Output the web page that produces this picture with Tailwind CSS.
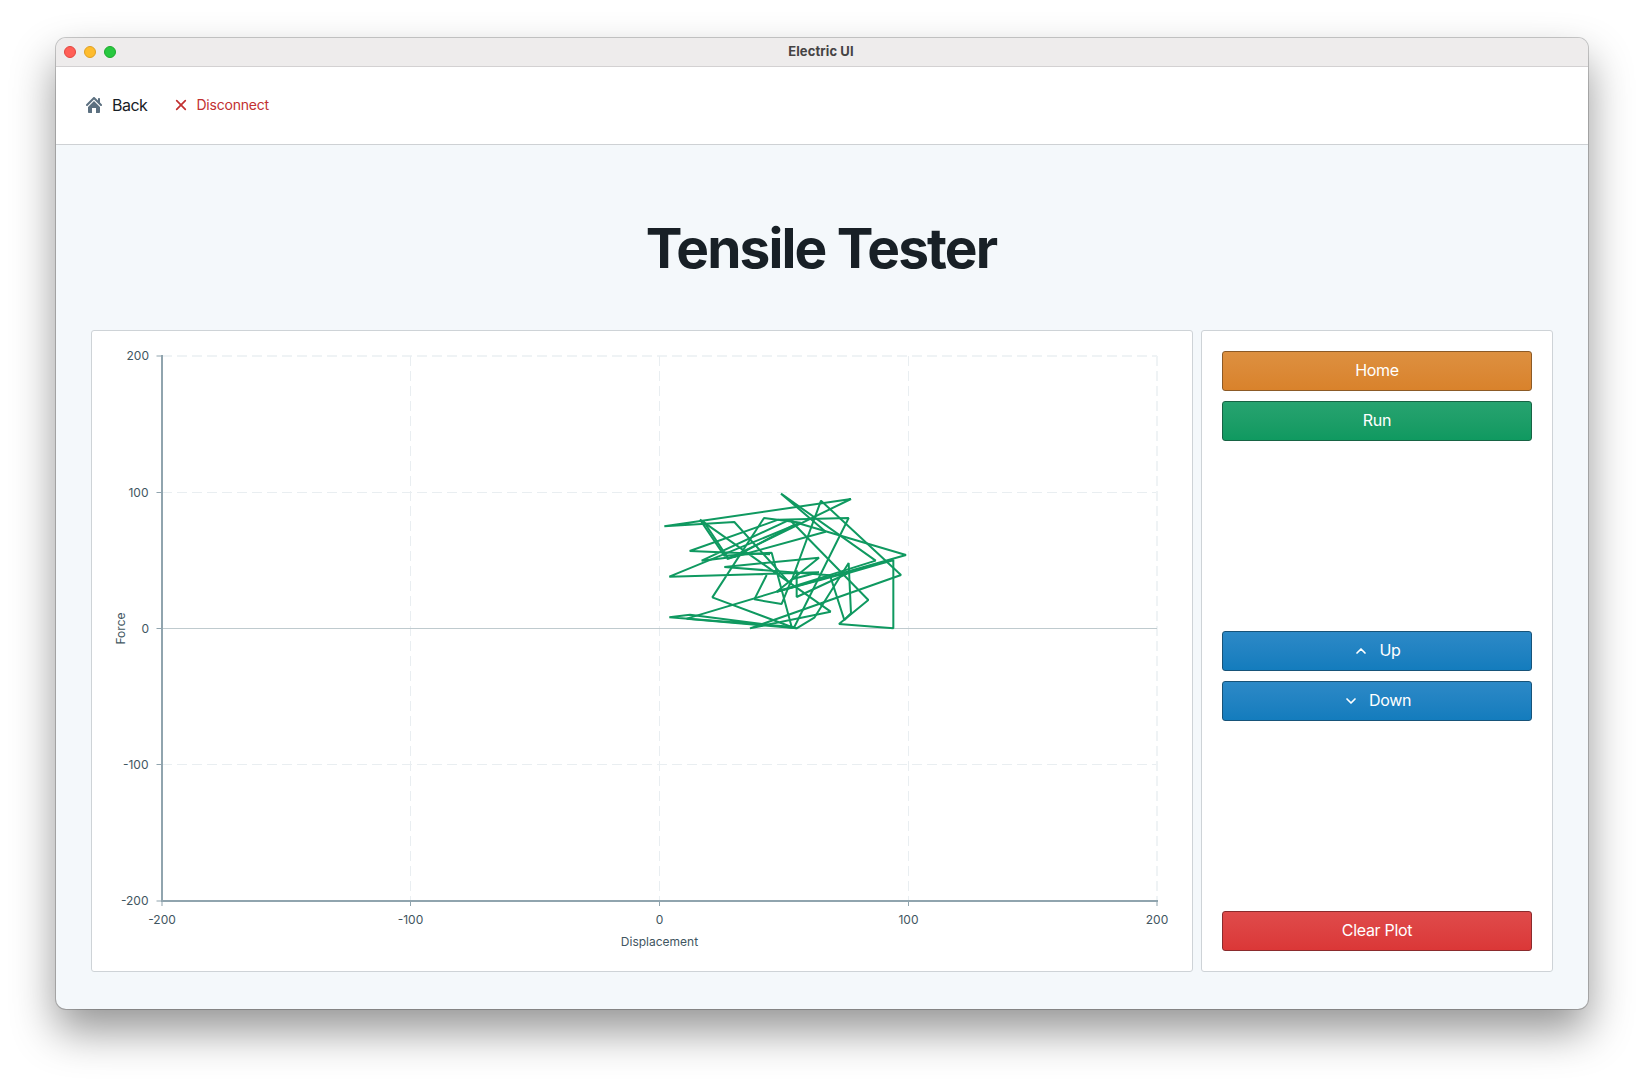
<!DOCTYPE html>
<html lang="en">
<head>
<meta charset="utf-8">
<title>Electric UI</title>
<script src="https://cdn.jsdelivr.net/npm/@tailwindcss/browser@4"></script>
</head>
<body class="h-[1083px] overflow-hidden bg-white pt-[38px] pl-14 font-['Inter',sans-serif] text-[#182026]">
<div class="flex h-[971px] w-[1532px] flex-col overflow-hidden rounded-[10px] bg-[#f4f8fb] shadow-[0_0_0_1px_rgba(0,0,0,0.2),0_22px_44px_rgba(0,0,0,0.42)]">
  <div class="grid h-[29px] shrink-0 grid-cols-3 items-center border-b border-[#d3d1d2] bg-[#eeecec] px-2">
    <div class="flex gap-2">
      <span class="size-3 rounded-full border border-[#e2463f] bg-[#ff5f57]"></span>
      <span class="size-3 rounded-full border border-[#dfa023] bg-[#febc2e]"></span>
      <span class="size-3 rounded-full border border-[#1daa2c] bg-[#28c840]"></span>
    </div>
    <div class="pr-[2px] pb-[2px] text-center text-[13px] leading-4 font-bold tracking-[0.1px] text-[#454344]">Electric UI</div>
  </div>
  <header class="flex h-[78px] shrink-0 items-center border-b border-[#ced1d4] bg-white pl-[30px]">
    <button class="flex items-center gap-[10px] text-base tracking-[-0.5px]">
      <svg class="mb-[1px] size-4" viewBox="0 0 16 16" fill="#5c7080"><path d="M2 10v5c0 .55.45 1 1 1h3v-5h4v5h3c.55 0 1-.45 1-1v-4.99L8 4.010 2 10zm13.710-2.710L14 5.590V2c0-.55-.45-1-1-1s-1 .45-1 1v1.590L8.710.290C8.530.110 8.280 0 8 0s-.530.110-.710.290l-7 7a1.003 1.003 0 001.420 1.420L8 2.410l6.290 6.290c.180.190.430.300.710.300a1.003 1.003 0 00.710-1.710z"/></svg>
      <span class="pb-[2px]">Back</span>
    </button>
    <button class="ml-[26px] flex items-center gap-[7px] text-sm tracking-[-0.2px] text-[#c23030]">
      <svg class="mb-[1px] size-4" viewBox="0 0 16 16" fill="none" stroke="#c23030" stroke-width="1.700" stroke-linecap="round"><path d="M3.700 3.700l8.600 8.600M12.300 3.700l-8.600 8.600"/></svg>
      <span class="pb-[2px]">Disconnect</span>
    </button>
  </header>
  <main class="flex flex-1 flex-col px-[35px]">
    <h1 class="mt-[67px] h-[72px] pr-[2px] text-center text-[55px] leading-[72px] font-bold tracking-[-1.850px]">Tensile Tester</h1>
    <div class="mt-[46px] flex h-[642px] gap-2">
      <section class="w-[1102px] rounded-[3px] border border-[#ced3d7] bg-white">
        <svg class="block" width="1100" height="640" viewBox="92 331 1100 640">
          <g stroke="#e9eef1" stroke-width="1" stroke-dasharray="10 5" fill="none">
            <path d="M162 356H1157" stroke-width="2" stroke="#eff3f5"/><path d="M162 492.500H1157M162 764.500H1157M410.500 356V901M659.500 356V901M908.500 356V901"/><path d="M1157 356V901" stroke-width="2" stroke="#eff3f5"/>
          </g>
          <path d="M162 628.500H1157" stroke="#bfcace"/>
          <path d="M156.500 492.500h5M156.500 628.500h5M156.500 764.500h5M410.500 901v5M659.500 901v5M908.500 901v5" stroke="#90a4ae"/>
          <path d="M156.500 356h5M156.500 901h5M162 901v5M1157 901v5" stroke="#c7d1d6" stroke-width="2"/>
          <path d="M162 355V901H1158" stroke="#90a4ae" stroke-width="2" fill="none"/>
          <g font-size="12" fill="#3f5661">
            <g text-anchor="end">
              <text x="149" y="360">200</text><text x="148.500" y="497">100</text><text x="149" y="633">0</text><text x="148.500" y="769">-100</text><text x="148.500" y="905">-200</text>
            </g>
            <g text-anchor="middle">
              <text x="162" y="924">-200</text><text x="410.500" y="924">-100</text><text x="659.500" y="924">0</text><text x="908.500" y="924">100</text><text x="1157" y="924">200</text>
              <text x="659.500" y="946">Displacement</text>
              <text transform="translate(125 628.500) rotate(-90)">Force</text>
            </g>
          </g>
          <g transform="translate(655 485) scale(.33333)" fill="none" stroke="#0f9960" stroke-width="6" stroke-linejoin="bevel">
            <path d="M335 270L298 343L380 357L410 283L492 262L43 275L437 113L327 99L172 337L410 426L350 203L208 212L135 104L527 380L285 430L738 270L498 47L405 300"/>
            <path d="M400 290L238 111L28 124L588 42L220 221L145 108"/>
            <path d="M345 208L104 198L370 104L581 99L418 426L43 397L105 389L425 430L478 398L581 234L588 385L568 405L525 271L208 246L492 218L365 320L753 210L400 106L140 227L240 215L420 118"/>
            <path d="M215 222L512 140L378 26L662 227L365 320L95 401L425 430"/>
            <path d="M425 256V336L580 264L715 225V430L552 417L640 345L408 108M365 320L715 226"/>
          </g>
        </svg>
      </section>
      <aside class="flex w-[352px] flex-col justify-between rounded-[3px] border border-[#ced3d7] bg-white p-5 text-base tracking-[-0.3px] text-white">
        <div class="flex flex-col gap-[10px]">
          <button class="h-10 rounded-[3px] border border-[#8c5a26] bg-linear-to-b from-[#dd9040] to-[#d9822b] pb-[2px]">Home</button>
          <button class="h-10 rounded-[3px] border border-[#176344] bg-linear-to-b from-[#27a370] to-[#0f9960] pb-[2px]">Run</button>
        </div>
        <div class="flex flex-col gap-[10px]">
          <button class="flex h-10 items-center justify-center gap-[10px] rounded-[3px] border border-[#175379] bg-linear-to-b from-[#2c89c7] to-[#137cbd]">
            <svg class="size-4" viewBox="0 0 16 16" fill="none" stroke="white" stroke-width="1.700" stroke-linecap="round" stroke-linejoin="round"><path d="M4 10l4-4 4 4"/></svg><span class="pb-[2px]">Up</span>
          </button>
          <button class="flex h-10 items-center justify-center gap-[10px] rounded-[3px] border border-[#175379] bg-linear-to-b from-[#2c89c7] to-[#137cbd]">
            <svg class="size-4" viewBox="0 0 16 16" fill="none" stroke="white" stroke-width="1.700" stroke-linecap="round" stroke-linejoin="round"><path d="M4 6l4 4 4-4"/></svg><span class="pb-[2px]">Down</span>
          </button>
        </div>
        <button class="h-10 rounded-[3px] border border-[#8a2b2d] bg-linear-to-b from-[#df4b4b] to-[#db3737] pb-[2px]">Clear Plot</button>
      </aside>
    </div>
  </main>
</div>
</body>
</html>
